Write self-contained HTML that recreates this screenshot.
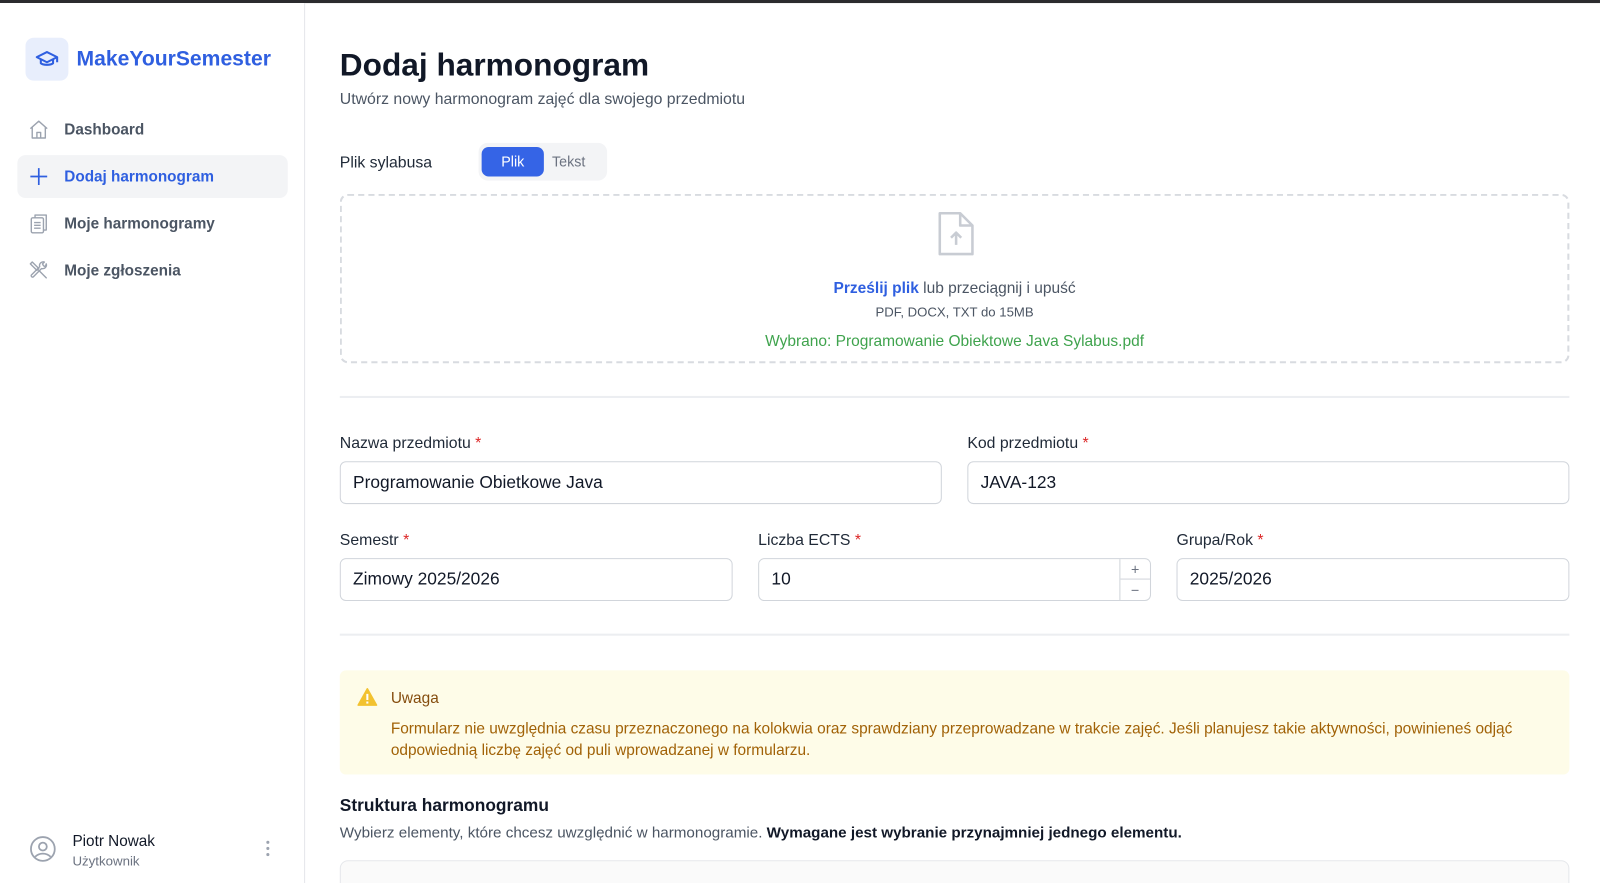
<!DOCTYPE html>
<html><head><meta charset="utf-8"><style>
*{box-sizing:border-box;margin:0;padding:0}
html,body{width:1600px;height:883px;overflow:hidden;background:#fff}
body{font-family:"Liberation Sans",sans-serif;color:#111827;position:relative}
.wrap{position:absolute;left:0;top:0;width:1568px;height:866px;transform:scale(1.0204);transform-origin:0 0}
.top{position:absolute;left:0;top:0;width:1568px;height:3px;background:#2b2b2e}
.side{position:absolute;left:0;top:3px;width:299px;height:880px;border-right:1px solid #e5e7eb;background:#fff}
.logo{position:absolute;left:25px;top:34px;width:42px;height:42px;border-radius:8px;background:#e8eefc;display:flex;align-items:center;justify-content:center}
.brand{position:absolute;left:75px;top:43px;font-size:20.7px;font-weight:bold;color:#2f5fe0}
.nav{position:absolute;left:17px;width:265px;height:42px;border-radius:8px;display:flex;align-items:center;padding-left:10px;font-size:15px;font-weight:bold;color:#4b5563}
.nav svg{margin-right:14px}
.nav.act{background:#f3f4f6;color:#2f5fe0}
.user{position:absolute;left:28px;top:815px}
.main{position:absolute;left:333px;top:0;width:1205px}
h1{position:absolute;top:46px;font-size:31px;font-weight:bold;color:#111827}
.sub{position:absolute;top:89px;font-size:15.5px;color:#4b5563;white-space:nowrap}
.lbl{position:absolute;font-size:15.5px;color:#1f2937;white-space:nowrap}
.req{color:#dc2626}
.inp{position:absolute;height:42px;border:1px solid #d1d5db;border-radius:6px;font-size:17px;padding:0 12px;display:flex;align-items:center;color:#111827}
.hr{position:absolute;left:0;width:1205px;height:2px;background:#eceef1}
</style></head><body><div class="wrap">
<div class="top"></div>
<div class="side">
 <div class="logo"><svg width="24" height="24" viewBox="0 0 24 24" fill="none" stroke="#2f5fe0" stroke-width="2" stroke-linejoin="round"><path d="M2 10l10-5 10 5-10 5z"/><path d="M6 12v4c2 2 10 2 12 0v-4"/><path d="M22 10v5"/></svg></div>
 <div class="brand">MakeYourSemester</div>
 <div class="nav" style="top:103px"><svg width="22" height="22" viewBox="0 0 24 24" fill="none" stroke="#9ca3af" stroke-width="1.5" stroke-linejoin="round"><path d="M3 11l9-8 9 8M5 9v12h14V9M10 21v-6h4v6"/></svg>Dashboard</div>
 <div class="nav act" style="top:149px"><svg width="22" height="22" viewBox="0 0 24 24" fill="none" stroke="#2f5fe0" stroke-width="1.8"><path d="M12 3v18M3 12h18"/></svg>Dodaj harmonogram</div>
 <div class="nav" style="top:195px"><svg width="22" height="22" viewBox="0 0 24 24" fill="none" stroke="#9ca3af" stroke-width="1.5" stroke-linejoin="round"><rect x="4" y="6" width="13" height="16" rx="1.5"/><path d="M8 6V3h12v16h-3M7 11h7M7 14h7M7 17h7"/></svg>Moje harmonogramy</div>
 <div class="nav" style="top:241px"><svg width="22" height="22" viewBox="0 0 24 24" fill="none" stroke="#9ca3af" stroke-width="1.5" stroke-linecap="round" stroke-linejoin="round"><path d="M3 5l2-2 7 7-2 2z"/><path d="M14 14l6 6M12 12l2 2"/><path d="M20 5a4 4 0 0 1-5 5L6 19a1.5 1.5 0 0 1-2-2l9-9a4 4 0 0 1 5-5l-2 2 1 2 2 1z"/></svg>Moje zgłoszenia</div>
</div>
<div class="user">
 <svg width="28" height="28" viewBox="0 0 24 24" fill="none" stroke="#9ca3af" stroke-width="1.5" style="position:absolute;left:0;top:3px"><circle cx="12" cy="12" r="10"/><circle cx="12" cy="10" r="3.3"/><path d="M5.5 18.5c3.5-3.5 9.5-3.5 13 0"/></svg>
 <div style="position:absolute;left:43px;top:1px;font-size:15px;white-space:nowrap;color:#111827">Piotr Nowak</div>
 <div style="position:absolute;left:43px;top:21px;font-size:13px;white-space:nowrap;color:#6b7280">Użytkownik</div>
 <div style="position:absolute;left:233px;top:9px;width:3px;font-size:0">
  <div style="width:3px;height:3px;border-radius:2px;background:#9ca3af;margin-bottom:3px"></div><div style="width:3px;height:3px;border-radius:2px;background:#9ca3af;margin-bottom:3px"></div><div style="width:3px;height:3px;border-radius:2px;background:#9ca3af"></div></div>
</div>
<div class="main">
 <h1>Dodaj harmonogram</h1>
 <div class="sub">Utwórz nowy harmonogram zajęć dla swojego przedmiotu</div>
 <div class="lbl" style="top:151px">Plik sylabusa</div>
 <div style="position:absolute;left:136px;top:140px;width:126px;height:37px;background:#f3f4f6;border-radius:9px">
  <div style="position:absolute;left:3px;top:4px;width:61px;height:29px;border-radius:7px;background:#3564e6;color:#fff;font-size:14px;text-align:center;line-height:29px">Plik</div>
  <div style="position:absolute;left:72px;top:4px;font-size:14px;color:#6b7280;line-height:29px">Tekst</div>
 </div>
 <div style="position:absolute;left:0;top:190px;width:1205px;height:166px;border:2px dashed #d8dbe0;border-radius:8px;text-align:center">
  <svg width="38" height="46" viewBox="0 0 38 46" fill="none" stroke="#c8ccd3" stroke-width="2.5" stroke-linejoin="round" style="position:absolute;left:583px;top:14px"><path d="M3 3h20l12 12v28H3z"/><path d="M23 3v12h12"/><path d="M19 34V22M14 27l5-5 5 5"/></svg>
  <div style="position:absolute;top:82px;width:100%;font-size:15.2px;color:#4b5563"><span style="color:#2f5fe0;font-weight:bold">Prześlij plik</span> lub przeciągnij i upuść</div>
  <div style="position:absolute;top:106px;width:100%;font-size:12.9px;color:#4b5563">PDF, DOCX, TXT do 15MB</div>
  <div style="position:absolute;top:134px;width:100%;font-size:15.2px;color:#3fa34d">Wybrano: Programowanie Obiektowe Java Sylabus.pdf</div>
 </div>
 <div class="hr" style="top:388px"></div>
 <div class="lbl" style="top:426px">Nazwa przedmiotu <span class="req">*</span></div>
 <div class="inp" style="left:0;top:452px;width:590px">Programowanie Obietkowe Java</div>
 <div class="lbl" style="left:615px;top:426px">Kod przedmiotu <span class="req">*</span></div>
 <div class="inp" style="left:615px;top:452px;width:590px">JAVA-123</div>
 <div class="lbl" style="top:521px">Semestr <span class="req">*</span></div>
 <div class="inp" style="left:0;top:547px;width:385px">Zimowy 2025/2026</div>
 <div class="lbl" style="left:410px;top:521px">Liczba ECTS <span class="req">*</span></div>
 <div class="inp" style="left:410px;top:547px;width:385px">10
  <div style="position:absolute;right:0;top:0;width:30px;height:40px;border-left:1px solid #d1d5db;color:#6b7280;font-size:14px;text-align:center">
   <div style="height:20px;line-height:20px;border-bottom:1px solid #d1d5db">+</div><div style="line-height:20px">−</div></div>
 </div>
 <div class="lbl" style="left:820px;top:521px">Grupa/Rok <span class="req">*</span></div>
 <div class="inp" style="left:820px;top:547px;width:385px">2025/2026</div>
 <div class="hr" style="top:621px"></div>
 <div style="position:absolute;left:0;top:657px;width:1205px;height:102px;background:#fefce8;border-radius:6px">
  <svg width="20" height="18" viewBox="0 0 20 18" style="position:absolute;left:17px;top:17px"><path d="M10 1L19 17H1z" fill="#f2c230" stroke="#f2c230" stroke-linejoin="round" stroke-width="1.5"/><rect x="9" y="6" width="2" height="6" fill="#fff"/><rect x="9" y="13.5" width="2" height="2" fill="#fff"/></svg>
  <div style="position:absolute;left:50px;top:19px;font-size:15.1px;color:#854d0e">Uwaga</div>
  <div style="position:absolute;left:50px;top:47px;width:1140px;font-size:15.1px;line-height:21px;color:#a16207">Formularz nie uwzględnia czasu przeznaczonego na kolokwia oraz sprawdziany przeprowadzane w trakcie zajęć. Jeśli planujesz takie aktywności, powinieneś odjąć odpowiednią liczbę zajęć od puli wprowadzanej w formularzu.</div>
 </div>
 <div style="position:absolute;top:780px;font-size:17px;font-weight:bold;color:#111827">Struktura harmonogramu</div>
 <div style="position:absolute;top:809px;font-size:14.9px;color:#4b5563;white-space:nowrap">Wybierz elementy, które chcesz uwzględnić w harmonogramie. <span style="color:#111827;font-weight:bold">Wymagane jest wybranie przynajmniej jednego elementu.</span></div>
 <div style="position:absolute;left:0;top:843px;width:1205px;height:60px;border:1px solid #e5e7eb;border-radius:8px;background:#fafafa"></div>
</div>
</div></body></html>
